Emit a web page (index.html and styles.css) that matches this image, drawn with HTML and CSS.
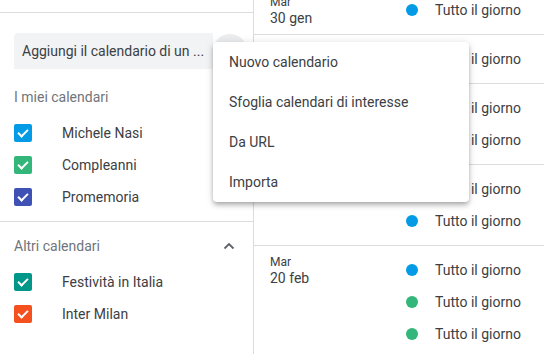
FILE: index.html
```html
<!DOCTYPE html>
<html lang="it">
<head>
    <meta charset="UTF-8">
    <title>Calendario</title>
    <link rel="stylesheet" href="styles.css">
</head>
<body>
    <div class="app">
        <aside class="sidebar">
            <div class="sidebar-top"></div>

            <div class="search-row">
                <div class="search">Aggiungi il calendario di un ...</div>
                <div class="round-btn"></div>
            </div>

            <div class="section">
                <div class="section-head">I miei calendari</div>
                <div class="cal"><span class="check blue"></span>Michele Nasi</div>
                <div class="cal"><span class="check green"></span>Compleanni</div>
                <div class="cal"><span class="check indigo"></span>Promemoria</div>
            </div>

            <div class="section">
                <div class="section-head">
                    Altri calendari
                    <svg class="chevron" width="12" height="8" viewBox="0 0 12 8">
                        <path d="M1.5 6.5 L6 2 L10.5 6.5" fill="none" stroke="#5f6368" stroke-width="1.8"/>
                    </svg>
                </div>
                <div class="cal"><span class="check teal"></span>Festività in Italia</div>
                <div class="cal"><span class="check orange"></span>Inter Milan</div>
            </div>
        </aside>

        <main class="agenda">
            <div class="day">
                <div class="date"><span class="wd">Mar</span>30 gen</div>
                <div class="events">
                    <div class="event"><span class="dot blue"></span>Tutto il giorno</div>
                </div>
            </div>
            <!-- date di questi giorni coperte dal menu -->
            <div class="day">
                <div class="date"></div>
                <div class="events">
                    <div class="event"><span class="dot blue"></span>Tutto il giorno</div>
                </div>
            </div>
            <div class="day">
                <div class="date"></div>
                <div class="events">
                    <div class="event"><span class="dot green"></span>Tutto il giorno</div>
                    <div class="event"><span class="dot blue"></span>Tutto il giorno</div>
                </div>
            </div>
            <div class="day">
                <div class="date"></div>
                <div class="events">
                    <div class="event"><span class="dot blue"></span>Tutto il giorno</div>
                    <div class="event"><span class="dot blue"></span>Tutto il giorno</div>
                </div>
            </div>
            <div class="day">
                <div class="date"><span class="wd">Mar</span>20 feb</div>
                <div class="events">
                    <div class="event"><span class="dot blue"></span>Tutto il giorno</div>
                    <div class="event"><span class="dot green"></span>Tutto il giorno</div>
                    <div class="event"><span class="dot green"></span>Tutto il giorno</div>
                </div>
            </div>
        </main>
    </div>

    <div class="menu">
        <div class="menu-item">Nuovo calendario</div>
        <div class="menu-item">Sfoglia calendari di interesse</div>
        <div class="menu-item">Da URL</div>
        <div class="menu-item">Importa</div>
    </div>
</body>
</html>
```

FILE: styles.css
```css
body {
    margin: 0;
    font-family: Roboto, "Liberation Sans", Arial, sans-serif;
    font-size: 14px;
    color: #3c4043;
    background: #fff;
    overflow: hidden;
    height: 354px;
}
.app {
    display: flex;
    height: 354px;
}
.sidebar {
    width: 253px;
    flex-shrink: 0;
    border-right: 1px solid #dadce0;
}
.sidebar-top {
    height: 12px;
    border-bottom: 1px solid #dadce0;
}
.search-row {
    display: flex;
    align-items: center;
    margin: 20px 0 0 14px;
}
.search {
    width: 191px;
    height: 36px;
    line-height: 36px;
    padding-left: 8px;
    background: #f1f3f4;
    border-radius: 4px 0 0 0;
    white-space: nowrap;
    overflow: hidden;
}
.round-btn {
    width: 34px;
    height: 34px;
    border-radius: 50%;
    background: #ebedef;
}
.section {
    padding-bottom: 8px;
}
.search-row + .section {
    margin-top: 8px;
}
.section + .section {
    border-top: 1px solid #dadce0;
    padding-top: 4px;
}
.section-head {
    display: flex;
    align-items: center;
    justify-content: space-between;
    height: 40px;
    padding: 0 18px 0 14px;
    color: #70757a;
}
.cal {
    display: flex;
    align-items: center;
    height: 32px;
    padding-left: 14px;
    color: #3c4043;
}
.check {
    position: relative;
    width: 18px;
    height: 18px;
    border-radius: 2px;
    margin-right: 30px;
}
.check::after {
    content: "";
    position: absolute;
    left: 6px;
    top: 3px;
    width: 4px;
    height: 8px;
    border: solid #fff;
    border-width: 0 2px 2px 0;
    transform: rotate(45deg);
}
.check.blue { background: #039be5; }
.check.green { background: #33b679; }
.check.indigo { background: #3f51b5; }
.check.teal { background: #009688; }
.check.orange { background: #f4511e; }

.agenda {
    flex: 1;
    margin-top: -14px;
}
.day {
    display: flex;
    padding: 8px 0;
    border-bottom: 1px solid #dadce0;
}
.date {
    width: 136px;
    padding-left: 16px;
    font-size: 14px;
    line-height: 16px;
    color: #3c4043;
}
.wd {
    display: block;
    font-size: 12px;
}
.event {
    display: flex;
    align-items: center;
    height: 32px;
    color: #3c4043;
}
.dot {
    width: 12px;
    height: 12px;
    border-radius: 50%;
    margin-right: 17px;
}
.dot.blue { background: #039be5; }
.dot.green { background: #33b679; }

.menu {
    position: absolute;
    left: 213px;
    top: 42px;
    width: 256px;
    background: #fff;
    border-radius: 4px;
    box-shadow: 0 4px 5px 0 rgba(0,0,0,0.14), 0 1px 10px 0 rgba(0,0,0,0.12), 0 2px 4px -1px rgba(0,0,0,0.2);
}
.menu-item {
    height: 40px;
    line-height: 40px;
    padding-left: 16px;
    color: #3c4043;
}
```
